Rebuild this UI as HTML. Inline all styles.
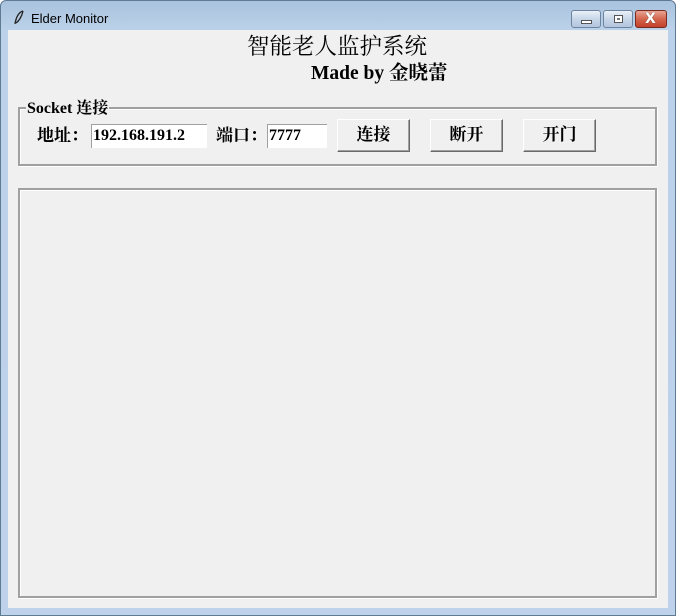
<!DOCTYPE html>
<html><head><meta charset="utf-8"><style>
*{margin:0;padding:0;box-sizing:border-box}
body{width:676px;height:616px;overflow:hidden;background:#fff;position:relative;font-family:"Liberation Serif","Noto Serif CJK SC",serif}
.win{position:absolute;left:0;top:0;width:676px;height:616px;background:linear-gradient(#a9c2dd,#bcd2ea 30px,#bed3eb);border:1px solid #5f7a95;border-radius:6px 6px 0 0}
.title{position:absolute;left:30px;top:10px;font:13px "Liberation Sans","DejaVu Sans",sans-serif;color:#000}
.client{position:absolute;left:8px;top:30px;width:660px;height:578px;background:#f0f0f0}
.a{position:absolute;white-space:nowrap;color:#000}
.groove{position:absolute;border:2px solid #a0a0a0;box-shadow:1px 1px 0 #fff, inset 1px 1px 0 #fff}
.btn{position:absolute;width:73px;height:33px;background:#f0f0f0;border:1px solid;border-color:#fff #696969 #696969 #fff;box-shadow:inset -1px -1px 0 #a0a0a0;font:bold 17px "Liberation Serif","Noto Serif CJK SC",serif;text-align:center;line-height:30px}
.ent{position:absolute;height:24px;background:#fff;border-left:1px solid #a0a0a0;border-top:1px solid #a0a0a0;font:bold 16px "Liberation Serif",serif;line-height:22px;padding-left:1px}
.tb{position:absolute;top:9px;height:18px;border:1px solid #6d84a0;border-radius:3px;background:linear-gradient(#eaf1f8,#c7d6e8 50%,#b3c6dd)}
</style></head><body>
<div class="win">
<svg style="position:absolute;left:12px;top:9px" width="12" height="16" viewBox="0 0 12 16"><path d="M10 1C6 2 3 7 2 14M10 1C9 6 6 11 3 13" stroke="#222" fill="none" stroke-width="1.3"/></svg>
<div class="title">Elder Monitor</div>
<div class="tb" style="left:570px;width:30px"><div style="position:absolute;left:9px;top:9px;width:11px;height:4px;background:#fff;border:1px solid #555"></div></div>
<div class="tb" style="left:602px;width:30px"><div style="position:absolute;left:10px;top:4px;width:9px;height:8px;border:1px solid #555;background:#fff;box-shadow:inset 0 0 0 2px #fff,inset 0 0 0 3px #777"></div></div>
<div class="tb" style="left:634px;width:32px;border-color:#7a2a20;background:linear-gradient(#e8a593,#d4664f 50%,#c4402a)"><div style="position:absolute;left:9px;top:0;color:#fff;font:bold 14px 'DejaVu Sans',sans-serif;line-height:17px;text-shadow:0 0 1px #333">X</div></div>
</div>
<div class="client"></div>
<div class="a" style="left:247px;top:31px;font:22.5px 'Noto Serif CJK SC','Noto Sans CJK SC',serif;line-height:28px">智能老人监护系统</div>
<div class="a" style="left:311px;top:62px;font:bold 19.5px 'Liberation Serif','Noto Serif CJK SC',serif;line-height:24px">Made by 金晓蕾</div>
<div class="groove" style="left:18px;top:107px;width:639px;height:59px"></div>
<div class="a" style="left:26px;top:98px;background:#f0f0f0;padding:0 1px;font:bold 16px 'Liberation Serif','Noto Serif CJK SC',serif;line-height:21px">Socket 连接</div>
<div class="a" style="left:37px;top:125px;font:bold 17px 'Liberation Serif','Noto Serif CJK SC',serif;line-height:22px">地址：</div>
<div class="ent" style="left:91px;top:124px;width:116px">192.168.191.2</div>
<div class="a" style="left:216px;top:125px;font:bold 17px 'Liberation Serif','Noto Serif CJK SC',serif;line-height:22px">端口：</div>
<div class="ent" style="left:267px;top:124px;width:60px">7777</div>
<div class="btn" style="left:337px;top:119px">连接</div>
<div class="btn" style="left:430px;top:119px">断开</div>
<div class="btn" style="left:523px;top:119px">开门</div>
<div class="groove" style="left:18px;top:188px;width:639px;height:410px"></div>
</body></html>
